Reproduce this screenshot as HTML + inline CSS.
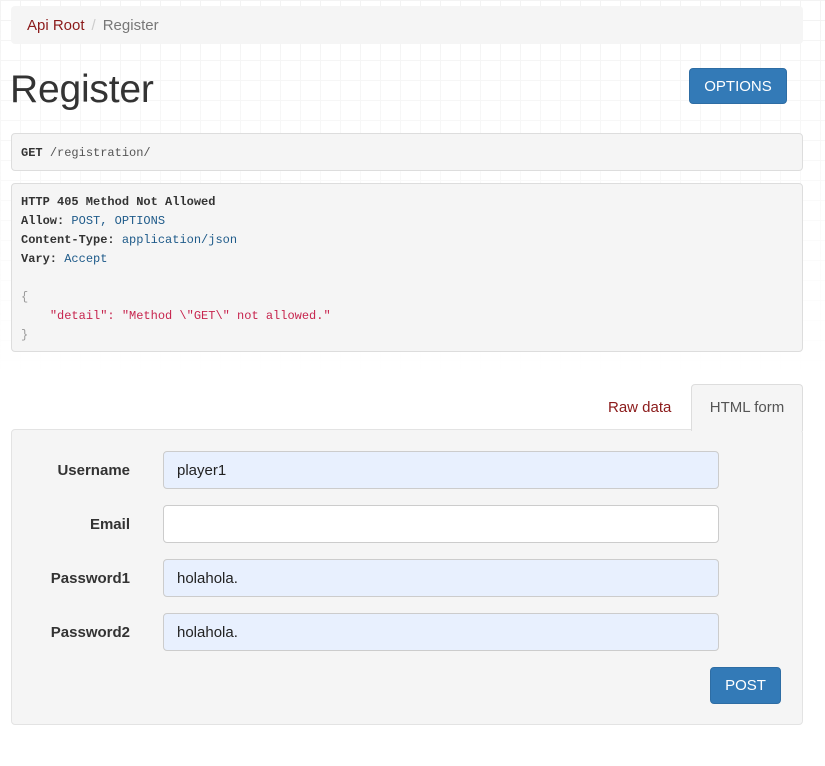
<!DOCTYPE html>
<html><head><meta charset="utf-8"><style>
*{box-sizing:border-box;margin:0;padding:0}
body{width:825px;height:766px;position:relative;font-family:"Liberation Sans",sans-serif;color:#333;background:#fff;overflow:hidden}
.grid{position:absolute;left:0;top:0;width:825px;height:380px;background-image:linear-gradient(#eee 1px,transparent 1px),linear-gradient(90deg,#eee 1px,transparent 1px);background-size:20px 20px;-webkit-mask-image:linear-gradient(#000,transparent);opacity:.7}
.abs{position:absolute}
.bc{left:11px;top:6px;width:792px;height:38px;background:#f5f5f5;border-radius:4px;font-size:15px;line-height:40px;padding-left:16px}
.bc a{color:#8b1a1a}
.bc .sep{color:#ccc;padding:0 7px}
.bc .cur{color:#777}
h1{left:10px;top:66px;font-size:39px;font-weight:normal;line-height:48px;letter-spacing:-0.2px}
.btn{background:#337ab7;border:1px solid #2e6da4;color:#fff;border-radius:4px;font-size:15px;text-align:center}
pre{font-family:"Liberation Mono","DejaVu Sans Mono",monospace;font-size:12px;background:#f5f5f5;border:1px solid #ddd;border-radius:4px;left:11px;width:792px;padding:0 9px;color:#333}
.k{font-weight:bold}.v{color:#1f5b8a}.s{color:#c7254e}.p{color:#999}
.lbl{left:20px;width:110px;text-align:right;font-weight:bold;font-size:15px}
.in{left:163px;width:556px;height:38px;border:1px solid #ccc;border-radius:4px;background:#e8f0fe;font-size:15px;line-height:38px;padding-left:13px;color:#222}
</style></head><body>
<div class="grid"></div>
<div class="abs bc"><a>Api Root</a><span class="sep">/</span><span class="cur">Register</span></div>
<h1 class="abs">Register</h1>
<div class="abs btn" style="left:689px;top:68px;width:98px;height:36px;line-height:35px">OPTIONS</div>
<pre class="abs" style="top:133px;height:38px;line-height:38px"><span class="k">GET</span> <span class="p" style="color:#555">/registration/</span></pre>
<pre class="abs" style="top:183px;height:169px;line-height:19px;padding-top:9px"><span class="k">HTTP 405 Method Not Allowed</span>
<span class="k">Allow:</span> <span class="v">POST, OPTIONS</span>
<span class="k">Content-Type:</span> <span class="v">application/json</span>
<span class="k">Vary:</span> <span class="v">Accept</span>

<span class="p">{</span>
    <span class="s">"detail": "Method \"GET\" not allowed."</span>
<span class="p">}</span></pre>
<div class="abs" style="left:608px;top:399px;font-size:15px;color:#8b1a1a">Raw data</div>
<div class="abs" style="left:11px;top:429px;width:792px;height:296px;background:#f5f5f5;border:1px solid #e3e3e3;border-radius:4px"></div>
<div class="abs" style="left:691px;top:384px;width:112px;height:47px;background:#f5f5f5;border:1px solid #ddd;border-bottom:none;border-radius:4px 4px 0 0;font-size:15px;color:#555;text-align:center;line-height:46px">HTML form</div>
<div class="abs lbl" style="top:462px">Username</div>
<div class="abs in" style="top:451px">player1</div>
<div class="abs lbl" style="top:516px">Email</div>
<div class="abs in" style="top:505px;background:#fff"></div>
<div class="abs lbl" style="top:570px">Password1</div>
<div class="abs in" style="top:559px">holahola.</div>
<div class="abs lbl" style="top:624px">Password2</div>
<div class="abs in" style="top:613px">holahola.</div>
<div class="abs btn" style="left:710px;top:667px;width:71px;height:37px;line-height:36px">POST</div>
</body></html>
